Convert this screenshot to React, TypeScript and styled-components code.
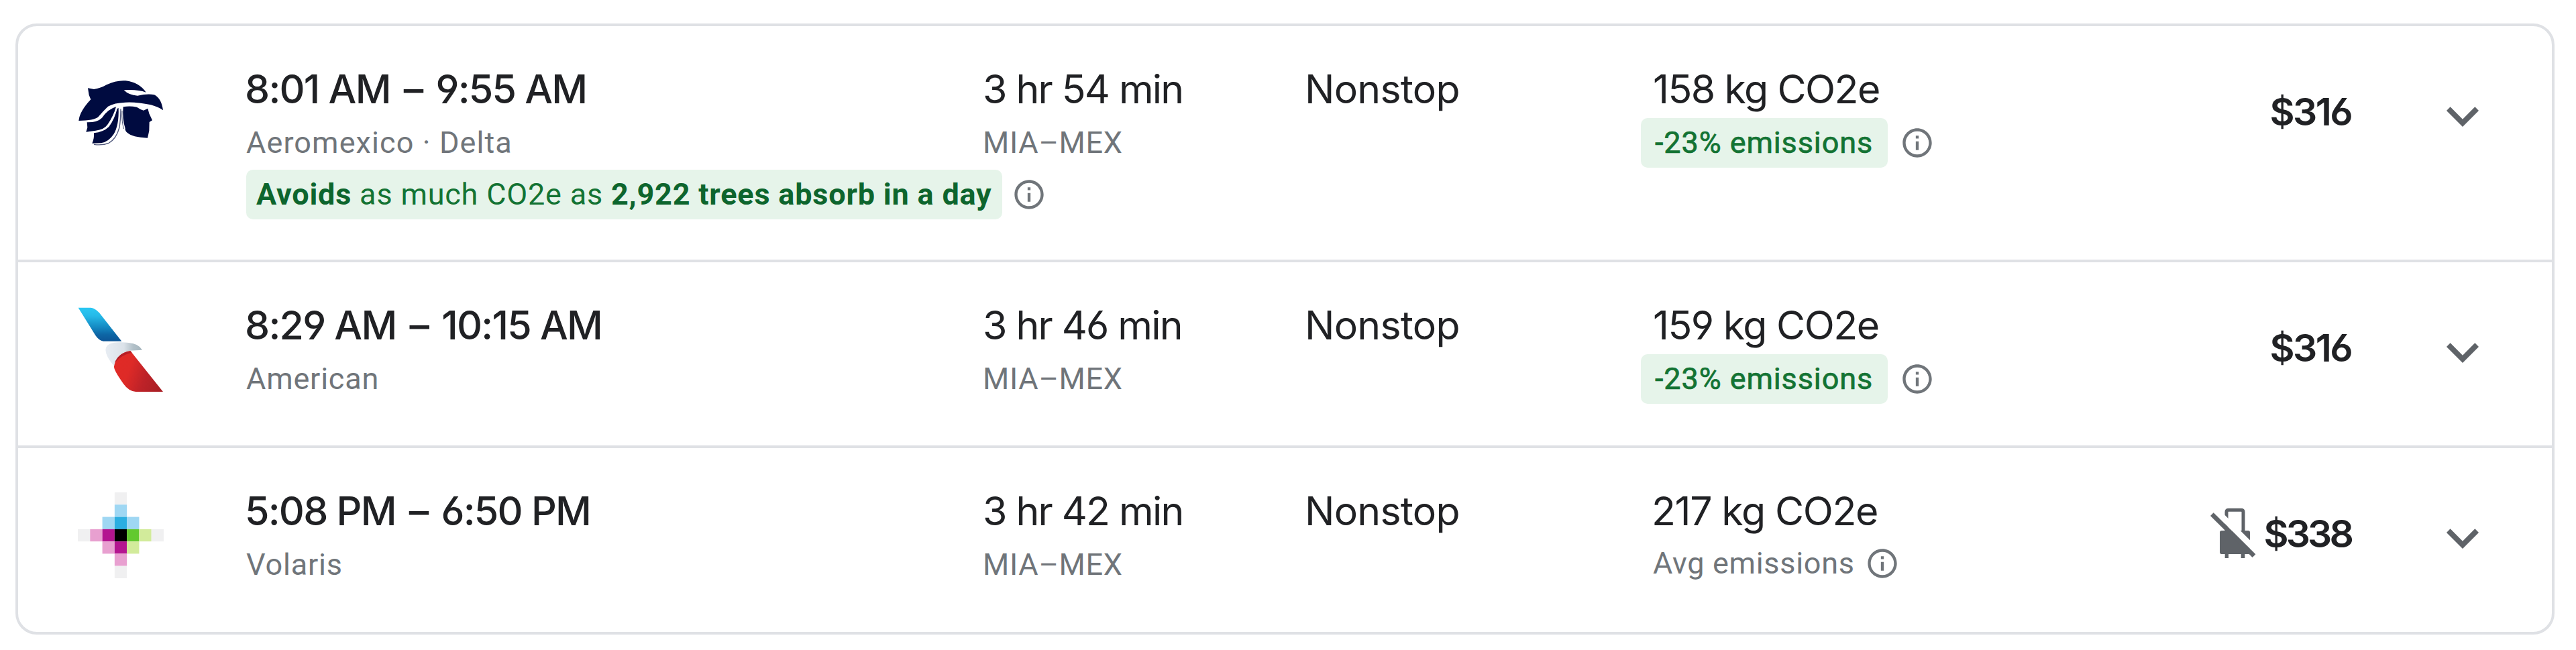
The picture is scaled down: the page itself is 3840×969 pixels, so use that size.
import React from "react";
import styled, { createGlobalStyle } from "styled-components";

const GlobalStyle = createGlobalStyle`
  body {
    margin: 0;
    background: #fff;
    font-family: Roboto, "Liberation Sans", sans-serif;
  }
`;

const Page = styled.main`
  box-sizing: border-box;
  width: 3840px;
  height: 969px;
  padding: 35px 32px 23px 23px;
  overflow: hidden;
`;

const Card = styled.ul`
  box-sizing: border-box;
  margin: 0;
  padding: 0;
  list-style: none;
  height: 911px;
  border: 4px solid #dfe1e5;
  border-radius: 32px;
`;

const Row = styled.li<{ $height: number }>`
  display: grid;
  grid-template-columns: 340px 1098px 480px 518px 600px 442px 1fr;
  align-items: start;
  height: ${(p) => p.$height}px;

  & + & {
    border-top: 4px solid #dfe1e5;
  }
`;

const LogoCell = styled.div`
  padding: 66px 0 0 89px;

  svg {
    display: block;
    width: 128px;
    height: 128px;
  }
`;

const Cell = styled.div`
  padding-top: 54px;
  white-space: nowrap;
`;

const Title = styled.div<{ $medium?: boolean; $spacing: number; $shift?: number }>`
  margin-left: ${(p) => p.$shift ?? 0}px;
  font-family: Inter, "Liberation Sans", sans-serif;
  font-size: 59px;
  font-weight: ${(p) => (p.$medium ? 500 : 400)};
  font-feature-settings: "cv03" 1, "cv04" 1;
  letter-spacing: ${(p) => p.$spacing}px;
  line-height: 80px;
  color: #202124;
`;

const Dash = styled.span`
  margin: 0 6px;
`;

const Sub = styled.div<{ $spacing?: number }>`
  font-size: 45px;
  letter-spacing: ${(p) => p.$spacing ?? 1.1}px;
  line-height: 80px;
  color: #70757a;
`;

const ChipLine = styled.div<{ $top: number; $shift?: number; $gap: number }>`
  display: flex;
  align-items: center;
  gap: ${(p) => p.$gap}px;
  margin-top: ${(p) => p.$top}px;
  margin-left: ${(p) => p.$shift ?? 0}px;
`;

const Chip = styled.span<{ $medium?: boolean }>`
  padding: ${(p) => (p.$medium ? "0 22px 0 21px" : "0 15px")};
  border-radius: 10px;
  background: #e6f4ea;
  color: #137333;
  font-size: 45px;
  font-weight: 400;
  -webkit-text-stroke: ${(p) => (p.$medium ? "0.7px #137333" : "0")};
  letter-spacing: ${(p) => (p.$medium ? 0.9 : 0.8)}px;
  line-height: 74px;

  b {
    font-weight: 700;
    color: #0d652d;
  }
`;

const AverageLabel = styled.span`
  font-size: 45px;
  letter-spacing: 0.7px;
  line-height: 75px;
  color: #70757a;
`;

const InfoSvg = styled.svg`
  display: block;
  flex: none;
  width: 52px;
  height: 52px;
  fill: #70757a;
`;

const PriceCell = styled.div`
  display: flex;
  justify-content: flex-end;
  align-items: center;
  gap: 11px;
  padding-top: 88px;
`;

const Price = styled.span<{ $spacing: number }>`
  font-family: Inter, "Liberation Sans", sans-serif;
  font-size: 57px;
  font-weight: 600;
  font-feature-settings: "cv03" 1, "cv04" 1;
  letter-spacing: ${(p) => p.$spacing}px;
  line-height: 80px;
  color: #202124;
`;

const BagSvg = styled.svg`
  display: block;
  width: 70px;
  height: 80px;
`;

const ExpandButton = styled.button`
  margin: 86px 0 0 118px;
  padding: 0;
  border: 0;
  background: none;
  width: 96px;
  height: 96px;

  svg {
    display: block;
    width: 96px;
    height: 96px;
    fill: #5f6368;
  }
`;

const InfoIcon = () => (
  <InfoSvg viewBox="0 0 24 24">
    <path d="M11 7h2v2h-2V7zm0 4h2v6h-2v-6zm1-9C6.48 2 2 6.48 2 12s4.48 10 10 10 10-4.48 10-10S17.52 2 12 2zm0 18c-4.41 0-8-3.59-8-8s3.59-8 8-8 8 3.59 8 8-3.59 8-8 8z" />
  </InfoSvg>
);

const NoBagIcon = () => (
  <BagSvg viewBox="40 50 210 240">
    <path d="M115 160V72q0-9 9-9h57q9 0 9 9v90" fill="none" stroke="#5f6368" strokeWidth="15" />
    <path
      d="M93 155h119q8 0 8 8v89q0 8-8 8h-15v18h-17v-18h-56v18h-16v-18H93q-8 0-8-8v-89q0-8 8-8z"
      fill="#5f6368"
    />
    <path d="M60 57.5L255 252.5" stroke="#fff" strokeWidth="27.5" />
    <path d="M50 82L238 268" stroke="#5f6368" strokeWidth="20" />
  </BagSvg>
);

const AeromexicoLogo = () => (
  <svg viewBox="78 45 384 384">
    <g fill="#000b40">
      <path d="M123 124L150 129Q180 125 207 109Q250 88 292 91Q352 98 383 143Q345 129 284 133Q306 156 345 158Q390 148 420 154Q452 170 459 223Q438 208 405 199Q340 185 290 188Q240 190 213 206Q190 228 168 254Q150 268 82 270Q86 228 136 175L128 155Z" />
      <path d="M119 277Q165 278 186 257Q214 217 249 208Q238 248 212 286Q195 311 158 314L115 320L121 300Z" />
      <path d="M150 325Q192 321 217 297Q243 262 254 216L260 213Q263 290 238 331Q214 366 182 370L142 371Q152 350 150 325Z" />
      <path d="M281 208Q310 202 342 209Q358 220 372 224L391 215L397 238L411 268L398 276L397 315L390 347Q322 345 297 322Q288 312 290 304Q276 262 281 208Z" />
    </g>
    <path d="M270 217Q269 270 264 300Q250 352 216 370Q190 381 150 376" fill="none" stroke="#50587c" strokeWidth="4" />
    <path d="M276 225Q273 275 284 306" fill="none" stroke="#50587c" strokeWidth="3" />
  </svg>
);

const AmericanLogo = () => (
  <svg viewBox="78 78 384 384">
    <defs>
      <linearGradient id="aaBlue" x1="0" y1="0" x2="0" y2="1">
        <stop offset="0" stopColor="#2bc8f3" />
        <stop offset="0.25" stopColor="#25b9e8" />
        <stop offset="0.6" stopColor="#1487c0" />
        <stop offset="0.8" stopColor="#0d66a5" />
        <stop offset="1" stopColor="#0d5596" />
      </linearGradient>
      <linearGradient id="aaGray" x1="0" y1="0" x2="1" y2="0">
        <stop offset="0" stopColor="#e8edf3" />
        <stop offset="0.5" stopColor="#dbe2e9" />
        <stop offset="0.75" stopColor="#b3c1c9" />
        <stop offset="1" stopColor="#a5b5bd" />
      </linearGradient>
      <linearGradient id="aaRed" x1="0" y1="0.4" x2="1" y2="0.7">
        <stop offset="0" stopColor="#e02a26" />
        <stop offset="0.3" stopColor="#de2a27" />
        <stop offset="0.65" stopColor="#bd2228" />
        <stop offset="1" stopColor="#aa1f25" />
      </linearGradient>
    </defs>
    <path d="M80 83H136Q157 86 174 106L274 233H192Q172 230 157 207Q118 144 80 83Z" fill="url(#aaBlue)" />
    <path d="M202 272Q203 247 236 240Q267 236 306 240Q351 244 366 272L312 275Q264 290 240 344Q203 301 202 272Z" fill="url(#aaGray)" />
    <path d="M240 346Q251 286 313 276L459 459H337Q305 456 281 422Q238 362 240 346Z" fill="url(#aaRed)" />
    <path d="M243 330Q258 287 313 277L320 284Q274 292 243 330Z" fill="#b51f27" />
  </svg>
);

const volarisCells: [number, number, string][] = [
  [3, 0, "#f0f0f1"],
  [3, 1, "#9fd7f3"],
  [2, 2, "#9fd7f3"],
  [3, 2, "#2baee1"],
  [4, 2, "#9fd7f3"],
  [0, 3, "#f0f0f1"],
  [1, 3, "#e8a0d0"],
  [2, 3, "#b41590"],
  [3, 3, "#000"],
  [4, 3, "#62c92f"],
  [5, 3, "#d2eb9b"],
  [6, 3, "#f0f0f1"],
  [2, 4, "#e8a0d0"],
  [3, 4, "#b41590"],
  [4, 4, "#d2eb9b"],
  [3, 5, "#e8a0d0"],
  [3, 6, "#f0f0f1"],
];

const VolarisLogo = () => (
  <svg viewBox="0 0 7 7">
    {volarisCells.map(([x, y, fill]) => (
      <rect key={`${x}-${y}`} x={x} y={y} width="1" height="1" fill={fill} />
    ))}
  </svg>
);

interface Flight {
  height: number;
  logo: React.ReactNode;
  departs: string;
  arrives: string;
  airline: string;
  airlineSpacing: number;
  trees?: string;
  duration: string;
  co2: string;
  co2Spacing: number;
  co2Shift: number;
  delta?: string;
  price: string;
  priceSpacing: number;
  noBag?: boolean;
}

const flights: Flight[] = [
  {
    height: 348,
    logo: <AeromexicoLogo />,
    departs: "8:01 AM",
    arrives: "9:55 AM",
    airline: "Aeromexico · Delta",
    airlineSpacing: 1.1,
    trees: "2,922 trees absorb in a day",
    duration: "3 hr 54 min",
    co2: "158 kg CO2e",
    co2Spacing: -1.6,
    co2Shift: 1,
    delta: "-23% emissions",
    price: "$316",
    priceSpacing: -2.6,
  },
  {
    height: 273,
    logo: <AmericanLogo />,
    departs: "8:29 AM",
    arrives: "10:15 AM",
    airline: "American",
    airlineSpacing: 0.8,
    duration: "3 hr 46 min",
    co2: "159 kg CO2e",
    co2Spacing: -1.5,
    co2Shift: 1,
    delta: "-23% emissions",
    price: "$316",
    priceSpacing: -2.6,
  },
  {
    height: 274,
    logo: <VolarisLogo />,
    departs: "5:08 PM",
    arrives: "6:50 PM",
    airline: "Volaris",
    airlineSpacing: 0.8,
    duration: "3 hr 42 min",
    co2: "217 kg CO2e",
    co2Spacing: -1.4,
    co2Shift: -1,
    price: "$338",
    priceSpacing: -3.9,
    noBag: true,
  },
];

const FlightRow = ({ flight }: { flight: Flight }) => (
  <Row $height={flight.height}>
    <LogoCell>{flight.logo}</LogoCell>
    <Cell>
      <Title $medium $spacing={-1.75} $shift={-2}>
        {flight.departs} <Dash>–</Dash> {flight.arrives}
      </Title>
      <Sub $spacing={flight.airlineSpacing}>{flight.airline}</Sub>
      {flight.trees && (
        <ChipLine $top={0} $gap={14}>
          <Chip>
            <b>Avoids</b> as much CO2e as <b>{flight.trees}</b>
          </Chip>
          <InfoIcon />
        </ChipLine>
      )}
    </Cell>
    <Cell>
      <Title $spacing={-1.8}>{flight.duration}</Title>
      <Sub $spacing={0.7}>MIA–MEX</Sub>
    </Cell>
    <Cell>
      <Title $spacing={-0.75}>Nonstop</Title>
    </Cell>
    <Cell>
      <Title $spacing={flight.co2Spacing} $shift={flight.co2Shift}>
        {flight.co2}
      </Title>
      {flight.delta ? (
        <ChipLine $top={3} $shift={-17} $gap={18}>
          <Chip $medium>{flight.delta}</Chip>
          <InfoIcon />
        </ChipLine>
      ) : (
        <ChipLine $top={0} $shift={1} $gap={15}>
          <AverageLabel>Avg emissions</AverageLabel>
          <InfoIcon />
        </ChipLine>
      )}
    </Cell>
    <PriceCell>
      {flight.noBag && <NoBagIcon />}
      <Price $spacing={flight.priceSpacing}>{flight.price}</Price>
    </PriceCell>
    <ExpandButton aria-label="Flight details">
      <svg viewBox="0 0 24 24">
        <path d="M16.59 8.59L12 13.17 7.41 8.59 6 10l6 6 6-6z" />
      </svg>
    </ExpandButton>
  </Row>
);

export default function App() {
  return (
    <>
      <GlobalStyle />
      <Page>
        <Card>
          {flights.map((flight) => (
            <FlightRow key={flight.departs} flight={flight} />
          ))}
        </Card>
      </Page>
    </>
  );
}
